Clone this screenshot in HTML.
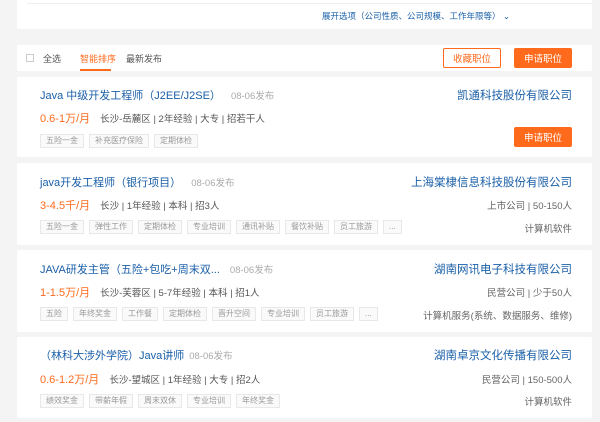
<!DOCTYPE html><html><head><meta charset="utf-8"><style>
*{margin:0;padding:0;box-sizing:border-box}
body{width:600px;height:422px;background:#f4f4f4;font-family:"Liberation Sans","Noto Sans CJK SC",sans-serif;position:relative;overflow:hidden}
.c{position:absolute;left:17px;width:575px;background:#fff;border-radius:2px}
.a{position:absolute;white-space:nowrap}
.t{left:23px;font-size:11px;color:#1a5fa8}
.t span{color:#aaa;font-size:9.5px;margin-left:10px}
.s{left:23px;font-size:11px;color:#ff6a1c}
.s span{color:#555;font-size:9.5px;margin-left:10px}
.co{right:20px;font-size:11.5px;color:#1a5fa8}
.r{right:20px;font-size:9.5px;color:#666}
.g{left:23px;display:flex;gap:5px}
.g i{font-style:normal;font-size:8px;color:#999;border:1px solid #e8e8e8;background:#fafafa;padding:0 5px;height:14px;line-height:12px}
.btn{position:absolute;width:58px;height:20px;font-size:9.5px;text-align:center;border-radius:2px;display:flex;align-items:center;justify-content:center}
</style></head><body>
<div class="c" style="top:-2px;height:31px"><div style="position:absolute;left:10px;right:0;top:5px;border-top:1px solid #eee"></div><div class="a" style="left:305px;top:12px;font-size:8.5px;color:#1a5fa8">展开选项（公司性质、公司规模、工作年限等） ⌄</div></div>
<div class="c" style="top:45px;height:26px">
<div class="a" style="left:9px;top:9px;width:8px;height:8px;border:1px solid #ccc"></div>
<div class="a" style="left:26px;top:7px;font-size:9px;color:#555">全选</div>
<div class="a" style="left:63px;top:7px;font-size:9px;color:#ff6a1c">智能排序</div>
<div class="a" style="left:63px;top:24px;width:31px;height:2px;background:#ff6a1c"></div>
<div class="a" style="left:109px;top:7px;font-size:9px;color:#555">最新发布</div>
<div class="btn" style="left:426px;top:3px;border:1px solid #ff6a1c;color:#ff6a1c">收藏职位</div>
<div class="btn" style="left:497px;top:3px;background:#ff6a1c;color:#fff">申请职位</div>
</div>
<div class="c" style="top:77px;height:80px">
<div class="a t" style="top:10px">Java 中级开发工程师（J2EE/J2SE）<span>08-06发布</span></div>
<div class="a co" style="top:10px">凯通科技股份有限公司</div>
<div class="a s" style="top:33px">0.6-1万/月<span>长沙-岳麓区 | 2年经验 | 大专 | 招若干人</span></div>
<div class="a g" style="top:57px"><i>五险一金</i><i>补充医疗保险</i><i>定期体检</i></div>
<div class="btn" style="left:497px;top:50px;background:#ff6a1c;color:#fff">申请职位</div>
</div>
<div class="c" style="top:163px;height:82px">
<div class="a t" style="top:11px">java开发工程师（银行项目）<span>08-06发布</span></div>
<div class="a co" style="top:11px">上海棠棣信息科技股份有限公司</div>
<div class="a s" style="top:34px">3-4.5千/月<span>长沙 | 1年经验 | 本科 | 招3人</span></div>
<div class="a r" style="top:35px">上市公司 | 50-150人</div>
<div class="a g" style="top:57px"><i>五险一金</i><i>弹性工作</i><i>定期体检</i><i>专业培训</i><i>通讯补贴</i><i>餐饮补贴</i><i>员工旅游</i><i>...</i></div>
<div class="a r" style="top:58px">计算机软件</div>
</div>
<div class="c" style="top:250px;height:82px">
<div class="a t" style="top:11px">JAVA研发主管（五险+包吃+周末双...<span>08-06发布</span></div>
<div class="a co" style="top:11px">湖南网讯电子科技有限公司</div>
<div class="a s" style="top:34px">1-1.5万/月<span>长沙-芙蓉区 | 5-7年经验 | 本科 | 招1人</span></div>
<div class="a r" style="top:35px">民营公司 | 少于50人</div>
<div class="a g" style="top:57px"><i>五险</i><i>年终奖金</i><i>工作餐</i><i>定期体检</i><i>晋升空间</i><i>专业培训</i><i>员工旅游</i><i>...</i></div>
<div class="a r" style="top:58px">计算机服务(系统、数据服务、维修)</div>
</div>
<div class="c" style="top:337px;height:81px">
<div class="a t" style="top:10px;left:23px">（林科大涉外学院）Java讲师<span style="margin-left:5px">08-06发布</span></div>
<div class="a co" style="top:10px">湖南卓京文化传播有限公司</div>
<div class="a s" style="top:34px">0.6-1.2万/月<span>长沙-望城区 | 1年经验 | 大专 | 招2人</span></div>
<div class="a r" style="top:35px">民营公司 | 150-500人</div>
<div class="a g" style="top:57px"><i>绩效奖金</i><i>带薪年假</i><i>周末双休</i><i>专业培训</i><i>年终奖金</i></div>
<div class="a r" style="top:57px">计算机软件</div>
</div>
</body></html>
